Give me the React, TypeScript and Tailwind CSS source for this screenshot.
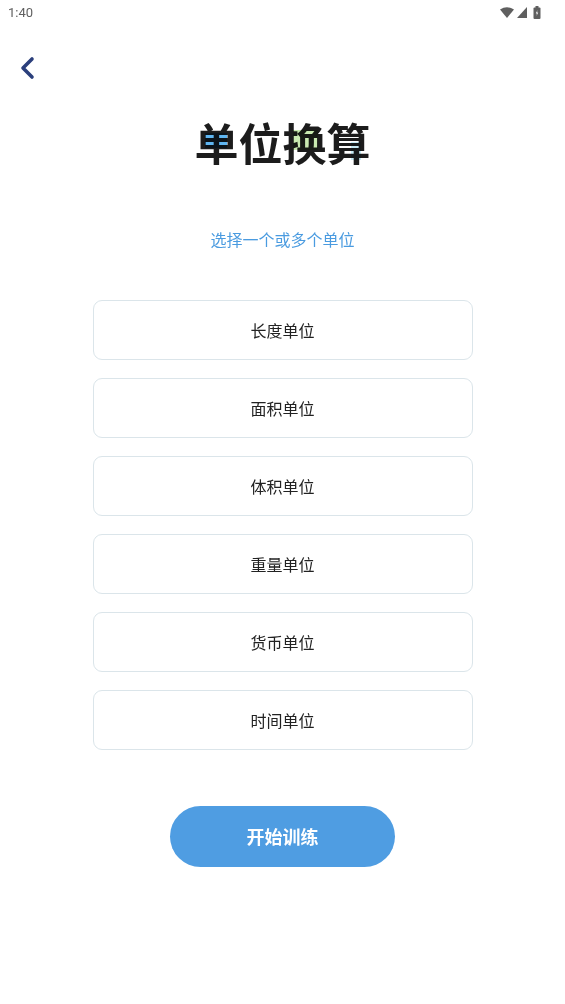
import React from "react";

const units = ["长度单位", "面积单位", "体积单位", "重量单位", "货币单位", "时间单位"];

function StatusBar() {
  return (
    <div className="flex h-[24px] items-center justify-between pl-[8px] pr-[24px] text-[13px] text-[#5f5f5f]">
      <span className="leading-none" style={{ fontFamily: "Roboto, sans-serif" }}>1:40</span>
      <div className="flex items-center gap-[3px]">
        <svg width="14" height="11" viewBox="0 0 14 11">
          <path d="M0 2.5 Q7 -2 14 2.5 L7 11 Z" fill="#5f5f5f" />
        </svg>
        <svg width="10" height="11" viewBox="0 0 10 11">
          <path d="M10 0 L10 11 L0 11 Z" fill="#5f5f5f" />
        </svg>
        <svg width="8" height="13" viewBox="0 0 8 13" className="ml-[3px]">
          <rect x="2.5" y="0" width="3" height="2" fill="#5f5f5f" />
          <rect x="0.5" y="1.5" width="7" height="11.5" rx="1" fill="#5f5f5f" />
          <path d="M4.5 4 L2.8 7.5 L4 7.5 L3.5 10 L5.2 6.5 L4 6.5 Z" fill="#fff" />
        </svg>
      </div>
    </div>
  );
}

export default function App() {
  return (
    <div
      className="min-h-[1004px] w-[565px] bg-white"
      style={{ fontFamily: '"Noto Sans CJK SC", "Noto Sans", sans-serif' }}
    >
      <StatusBar />
      <div className="pl-[18px] pt-[32px]">
        <svg width="20" height="24" viewBox="0 0 20 24">
          <path d="M14 3 L5 12 L14 21" fill="none" stroke="#2b3f7c" strokeWidth="3.6" strokeLinecap="round" strokeLinejoin="round" />
        </svg>
      </div>

      <div className="mt-[32px] flex justify-center">
        <div className="relative">
          <h1 className="relative text-[44px] font-bold leading-[60px] tracking-[0px] text-[#1c1c1c]">单位换算</h1>
          <div className="absolute left-[10px] top-[21px] h-[15px] w-[22px] bg-[#5fb6f2] mix-blend-multiply" />
          <div className="absolute left-[98px] top-[18px] h-[20px] w-[25px] bg-[#c9eab0] mix-blend-multiply" />
          <div className="absolute left-[156px] top-[30px] h-[18px] w-[10px] bg-[#c8ecf6] mix-blend-multiply" />
        </div>
      </div>

      <p className="mt-[55px] text-center text-[16px] leading-[24px] text-[#4a9be0]">选择一个或多个单位</p>

      <div className="mt-[49px] flex flex-col items-center gap-[18px]">
        {units.map((u) => (
          <button
            key={u}
            className="flex h-[60px] w-[380px] items-center justify-center rounded-[9px] border border-[#dbe5ea] bg-white text-[16px] text-[#222]"
          >
            {u}
          </button>
        ))}
      </div>

      <div className="mt-[56px] flex justify-center">
        <button className="h-[61px] w-[225px] rounded-full bg-[#4f9de2] text-[18px] font-bold text-white">
          开始训练
        </button>
      </div>
    </div>
  );
}
